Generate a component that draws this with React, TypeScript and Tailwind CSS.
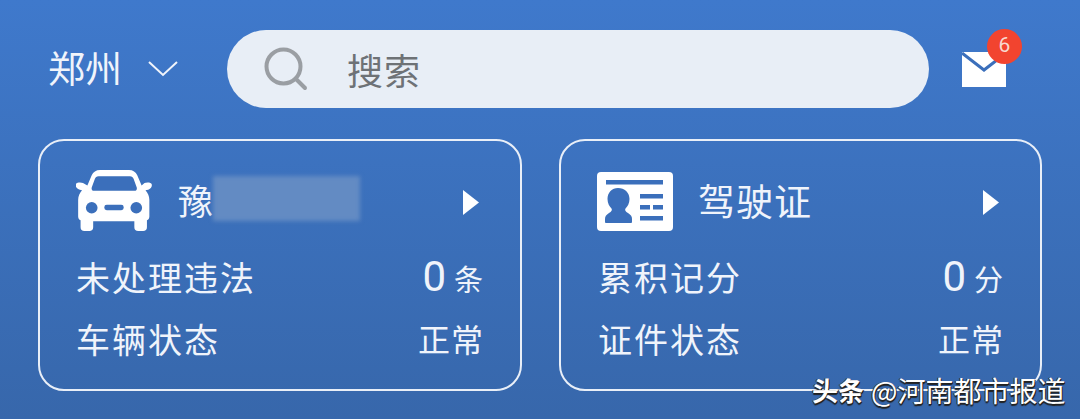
const CJK = "font-['Noto_Sans_CJK_SC','Noto_Sans',sans-serif]"

function CarIcon() {
  return (
    <svg width="76" height="62" viewBox="0 0 78 64" fill="none" className="shrink-0">
      <path
        fill="#fff"
        d="M24 1h30c4 0 7 2 8.500 5.500L67 17l3-2.500c2-1 7-1 7.500 1.500.5 3-2 5.500-6.500 6 2.500 3 4 6 4 10v17c0 2-1 3.500-2.500 4v7c0 2.500-1.500 4-4 4h-5c-2.500 0-4-1.500-4-4v-6H17v6c0 2.500-1.500 4-4 4H8c-2.500 0-4-1.500-4-4v-7C2.500 52.500 1.500 51 1.500 49V32c0-4 1.500-7 4-10-4.500-.5-7-3-6.500-6 .5-2.500 5.500-2.500 7.500-1.500L11 17l4.500-10.500C17 3 20 1 24 1Z"
        transform="translate(.5 0)"
      />
      <path fill="#3b6fbb" d="M22.500 7.500h33c2 0 3 1 3.700 2.500l3.300 9c.6 2-.5 3.500-2.500 3.500H18.500c-2 0-3.100-1.500-2.500-3.500l3.300-9c.7-1.500 1.700-2.500 3.700-2.500Z" />
      <circle cx="16" cy="40" r="6" fill="#3b6fbb" />
      <circle cx="62" cy="40" r="6" fill="#3b6fbb" />
      <rect x="29" y="37" width="20" height="5.500" rx="2.500" fill="#3b6fbb" />
    </svg>
  )
}

function LicenseIcon() {
  return (
    <svg width="76" height="60" viewBox="0 0 76 60" fill="none" className="shrink-0 mt-[3px] -ml-[1px]">
      <rect width="76" height="59" rx="4" fill="#fff" />
      <rect x="9" y="8" width="57" height="4.500" fill="#3b6fbb" />
      <path
        fill="#3b6fbb"
        d="M21 16c6.500 0 11.500 4.500 11.500 11 0 4.500-2 7.500-4 9.500-1 1.500 0 3 2.500 4.500 3 2 4 3.500 4 6v3c0 .5-.5 1-1 1H9c-.5 0-1-.5-1-1v-3c0-2.500 1-4 4-6 2.500-1.500 3.500-3 2.500-4.500-2-2-4-5-4-9.500C10.500 20.500 15 16 21 16Z"
      />
      <rect x="43" y="22" width="23" height="4.500" fill="#3b6fbb" />
      <rect x="43" y="33" width="10" height="4.500" fill="#3b6fbb" />
      <rect x="56" y="33" width="10" height="4.500" fill="#3b6fbb" />
      <rect x="43" y="44" width="23" height="4.500" fill="#3b6fbb" />
    </svg>
  )
}

function Triangle() {
  return (
    <svg width="16" height="25" viewBox="0 0 16 25" className="block shrink-0">
      <path d="M0 0 16 12.500 0 25Z" fill="#fff" />
    </svg>
  )
}

function Row({ label, value, unit }: { label: string; value: string; unit?: string }) {
  return (
    <div className="flex items-center justify-between h-[62px]">
      <span className="text-[34px] tracking-[2px] font-normal">{label}</span>
      {unit ? (
        <span className="flex items-baseline mt-[2px]">
          <span className="text-[42px] leading-none font-['Roboto',sans-serif] font-normal mr-[8px]">{value}</span>
          <span className="text-[29px] font-normal leading-none">{unit}</span>
        </span>
      ) : (
        <span className="text-[32px] tracking-[1px] font-normal -mr-[1px]">{value}</span>
      )}
    </div>
  )
}

export default function App() {
  return (
    <div className={`relative w-[1080px] h-[419px] overflow-hidden text-[#f0f4fb] bg-gradient-to-b from-[#3f79cc] to-[#3767ab] ${CJK}`}>
      {/* top bar */}
      <div className="flex items-center h-[78px] mt-[30px] ml-[48px]">
        <span className="text-[37px] font-normal w-[99px] -mt-[2px]">郑州</span>
        <svg width="32" height="20" viewBox="0 0 32 20" fill="none" stroke="#f0f4fb" strokeWidth="2">
          <path d="M2 3 16 16 30 3" />
        </svg>
        <div className="flex items-center w-[702px] h-[78px] rounded-[39px] bg-[#e8eef6] ml-[48px] pl-[37px]">
          <svg width="44" height="44" viewBox="0 0 44 44" fill="none" stroke="#9a9ea3" strokeWidth="4" strokeLinecap="round">
            <circle cx="19.500" cy="19.500" r="17" />
            <path d="M32 32 41 41" />
          </svg>
          <span className="text-[36px] text-[#6e7276] font-normal ml-[39px] tracking-[1px]">搜索</span>
        </div>
        <div className="relative ml-[33px] -mt-[4px]">
          <svg width="44" height="35" viewBox="0 0 44 35" className="block mt-[4px]">
            <rect width="44" height="35" fill="#fff" />
            <path d="M0 1 22 18 44 1" fill="none" stroke="#3b6fbb" strokeWidth="3" />
          </svg>
          <span className="absolute -top-[19px] left-[25px] flex items-center justify-center w-[35px] h-[35px] rounded-full bg-[#f2442f] text-[#f8d9cf] text-[21px] font-['Roboto',sans-serif]">
            6
          </span>
        </div>
      </div>

      {/* cards */}
      <div className="flex gap-[37px] ml-[38px] mt-[31px]">
        <div className="w-[484px] h-[252px] rounded-[26px] border-[2.500px] border-[#e9eff8] pl-[36px] pr-[37px] pt-[27px]">
          <div className="flex items-center h-[64px] mb-[13px]">
            <CarIcon />
            <span className="text-[35px] font-normal ml-[26px]">豫</span>
            <div className="w-[147px] h-[45px] -mt-[4px] bg-[#638bc3] blur-[2px]" />
            <div className="flex-1" />
            <div className="mr-[4px] mt-[4px]"><Triangle /></div>
          </div>
          <Row label="未处理违法" value="0" unit="条" />
          <Row label="车辆状态" value="正常" />
        </div>
        <div className="w-[483px] h-[252px] rounded-[26px] border-[2.500px] border-[#e9eff8] px-[37px] pt-[27px]">
          <div className="flex items-center h-[64px] mb-[13px]">
            <LicenseIcon />
            <span className="text-[37px] tracking-[1px] font-normal ml-[25px] mt-[2px]">驾驶证</span>
            <div className="flex-1" />
            <div className="mr-[4px] mt-[4px]"><Triangle /></div>
          </div>
          <Row label="累积记分" value="0" unit="分" />
          <Row label="证件状态" value="正常" />
        </div>
      </div>

      {/* watermark over the card edge */}
      <div className="absolute left-[812px] top-[374px] flex items-center leading-[32px] text-white [text-shadow:1px_1px_0_#222,-1px_0_0_#333,0_2px_1px_#222]">
        <span className="text-[26px] font-bold">头条</span>
        <span className="text-[28px] ml-[7px] font-normal">@河南都市报道</span>
      </div>
    </div>
  )
}
